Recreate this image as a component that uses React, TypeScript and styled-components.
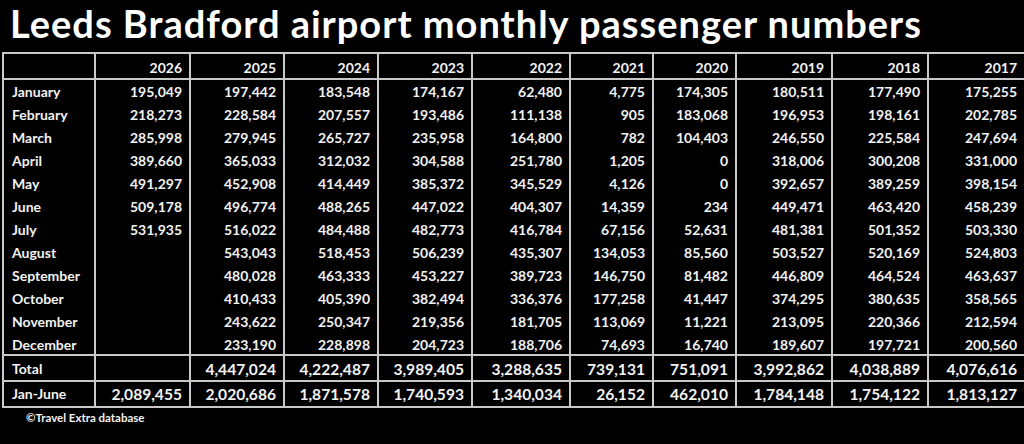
import React from "react";
import styled, { createGlobalStyle } from "styled-components";

const GlobalStyle = createGlobalStyle`
  html, body { margin: 0; padding: 0; background: #000; }
  body { overflow: hidden; }
`;

const Page = styled.div`
  width: 1024px;
  height: 444px;
  overflow: hidden;
  background: #000;
  color: #f2f2f2;
  font-family: Lato, "Open Sans", sans-serif;
  font-weight: 700;
`;

const Title = styled.h1`
  margin: 0;
  height: 52px;
  padding-left: 10px;
  font-size: 38px;
  letter-spacing: 1px;
  line-height: 47px;
  font-weight: 700;
  color: #fff;
  white-space: nowrap;
`;

const LINE = "#c9c9c9";

const Grid = styled.div`
  display: grid;
  grid-template-columns: 92px 95px 94px 94px 94px 98px 83px 83px 96px 96px 97px;
  width: max-content;
  margin-left: 2px;
  border-left: 2px solid ${LINE};
  border-top: 2px solid ${LINE};
`;

type Kind = "head" | "month" | "last" | "total" | "jan";

const heights: Record<Kind, string> = {
  head: "26px",
  month: "23px",
  last: "23px",
  total: "26px",
  jan: "26px",
};
const pads: Record<Kind, string> = {
  head: "3px",
  month: "1px",
  last: "1px",
  total: "2px",
  jan: "1px",
};

const Cell = styled.div<{ $kind: Kind; $label?: boolean }>`
  box-sizing: border-box;
  height: ${(p) => heights[p.$kind]};
  padding-top: ${(p) => pads[p.$kind]};
  padding-left: ${(p) => (p.$label ? "8px" : "0")};
  padding-right: ${(p) => (p.$label ? "0" : "7px")};
  border-right: 2px solid ${LINE};
  border-bottom: ${(p) => (p.$kind === "month" ? "none" : `2px solid ${LINE}`)};
  text-align: ${(p) => (p.$label ? "left" : "right")};
  font-size: ${(p) => (!p.$label && (p.$kind === "total" || p.$kind === "jan") ? "15.6px" : "14px")};
  line-height: ${(p) => (p.$kind === "month" || p.$kind === "last" ? "21px" : "22px")};
  white-space: nowrap;
  overflow: hidden;
`;

const Footnote = styled.div`
  padding: 3px 0 0 26px;
  font-size: 11.5px;
  line-height: 14px;
  color: #f2f2f2;
`;

const years = ["2026", "2025", "2024", "2023", "2022", "2021", "2020", "2019", "2018", "2017"];

const months: [string, string[]][] = [
  ["January", ["195,049", "197,442", "183,548", "174,167", "62,480", "4,775", "174,305", "180,511", "177,490", "175,255"]],
  ["February", ["218,273", "228,584", "207,557", "193,486", "111,138", "905", "183,068", "196,953", "198,161", "202,785"]],
  ["March", ["285,998", "279,945", "265,727", "235,958", "164,800", "782", "104,403", "246,550", "225,584", "247,694"]],
  ["April", ["389,660", "365,033", "312,032", "304,588", "251,780", "1,205", "0", "318,006", "300,208", "331,000"]],
  ["May", ["491,297", "452,908", "414,449", "385,372", "345,529", "4,126", "0", "392,657", "389,259", "398,154"]],
  ["June", ["509,178", "496,774", "488,265", "447,022", "404,307", "14,359", "234", "449,471", "463,420", "458,239"]],
  ["July", ["531,935", "516,022", "484,488", "482,773", "416,784", "67,156", "52,631", "481,381", "501,352", "503,330"]],
  ["August", ["", "543,043", "518,453", "506,239", "435,307", "134,053", "85,560", "503,527", "520,169", "524,803"]],
  ["September", ["", "480,028", "463,333", "453,227", "389,723", "146,750", "81,482", "446,809", "464,524", "463,637"]],
  ["October", ["", "410,433", "405,390", "382,494", "336,376", "177,258", "41,447", "374,295", "380,635", "358,565"]],
  ["November", ["", "243,622", "250,347", "219,356", "181,705", "113,069", "11,221", "213,095", "220,366", "212,594"]],
  ["December", ["", "233,190", "228,898", "204,723", "188,706", "74,693", "16,740", "189,607", "197,721", "200,560"]],
];

const total = ["", "4,447,024", "4,222,487", "3,989,405", "3,288,635", "739,131", "751,091", "3,992,862", "4,038,889", "4,076,616"];
const janJune = ["2,089,455", "2,020,686", "1,871,578", "1,740,593", "1,340,034", "26,152", "462,010", "1,784,148", "1,754,122", "1,813,127"];

function Row({ label, values, kind }: { label: string; values: string[]; kind: Kind }) {
  return (
    <>
      <Cell $kind={kind} $label>
        {label}
      </Cell>
      {values.map((v, i) => (
        <Cell key={i} $kind={kind}>
          {v}
        </Cell>
      ))}
    </>
  );
}

export default function App() {
  return (
    <Page>
      <GlobalStyle />
      <Title>Leeds Bradford airport monthly passenger numbers</Title>
      <Grid>
        <Row label="" values={years} kind="head" />
        {months.map(([m, vals], i) => (
          <Row key={m} label={m} values={vals} kind={i === months.length - 1 ? "last" : "month"} />
        ))}
        <Row label="Total" values={total} kind="total" />
        <Row label="Jan-June" values={janJune} kind="jan" />
      </Grid>
      <Footnote>©Travel Extra database</Footnote>
    </Page>
  );
}
